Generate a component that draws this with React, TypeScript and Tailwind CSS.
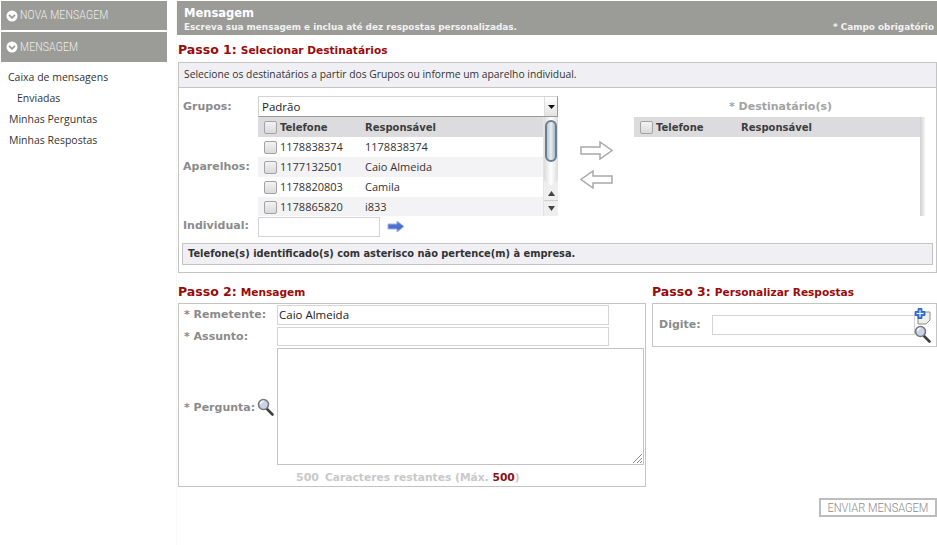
import React from 'react';

const verdana = 'font-["DejaVu_Sans",Verdana,sans-serif]';
const tahoma = 'font-["Open_Sans",sans-serif]';

function NavHeader({ label, className }: { label: string; className: string }) {
  return (
    <div className={`bg-[#9b9b98] flex items-center pl-[5px] gap-[2px] overflow-hidden ${className}`}>
      <svg width="12" height="12" viewBox="0 0 12 12" className="shrink-0">
        <circle cx="6" cy="6" r="5.5" fill="#ffffff" />
        <path d="M3 4.8 L6 7.8 L9 4.8" fill="none" stroke="#9b9b98" strokeWidth="1.8" />
      </svg>
      <span className='inline-block origin-left scale-x-[0.8] -translate-y-[1px] whitespace-nowrap font-["Roboto",sans-serif] font-light text-[13px] tracking-[0.2px] leading-none text-[#efefed]'>{label}</span>
    </div>
  );
}

function CheckBox() {
  return <span className="block w-[13px] h-[13px] shrink-0 rounded-[2px] border border-[#a3a3a3] bg-linear-to-b from-[#f2f2f2] to-[#dadada]" />;
}

function TableHeader() {
  return (
    <div className="h-[20px] bg-[#dcdcde] flex items-center pl-[6px] text-[10px] font-bold text-[#3d3d3d]">
      <CheckBox />
      <span className="ml-[3px] w-[85px]">Telefone</span>
      <span>Responsável</span>
    </div>
  );
}

function OutlineArrow({ left }: { left?: boolean }) {
  return (
    <svg width="33" height="19" viewBox="0 0 33 19" className={left ? '-scale-x-100' : ''}>
      <path d="M1 6 H20 V1 L32 9.5 L20 18 V13 H1 Z" fill="#ffffff" stroke="#a9a9a9" strokeWidth="1.5" />
    </svg>
  );
}

function Lens() {
  return (
    <svg width="17" height="18" viewBox="0 0 17 18">
      <path d="M10 11 L15.5 16.5" stroke="#3f3f3f" strokeWidth="2.6" strokeLinecap="round" />
      <circle cx="6.5" cy="6.5" r="5" fill="#c9d3ea" stroke="#77797d" strokeWidth="1.6" />
      <path d="M3.5 6 A3.2 3.2 0 0 1 6.5 3.2" fill="none" stroke="#ffffff" strokeWidth="1.2" />
    </svg>
  );
}

function Heading({ step, title }: { step: string; title: string }) {
  return (
    <div className="text-[#9a0b0b] font-bold leading-none flex items-baseline gap-[4px]">
      <span className="text-[12.5px]">{step}</span>
      <span className="text-[10.6px]">{title}</span>
    </div>
  );
}

const rows = [
  ['1178838374', '1178838374'],
  ['1177132501', 'Caio Almeida'],
  ['1178820803', 'Camila'],
  ['1178865820', 'i833'],
];

export default function App() {
  return (
    <div className={`${verdana} w-[937px] h-[545px] overflow-hidden bg-white flex text-[#333]`}>
      <aside className="w-[176px] shrink-0 pt-[1px] pl-[1px] pr-[9px]">
        <NavHeader label="NOVA MENSAGEM" className="h-[29px] mb-[2px]" />
        <NavHeader label="MENSAGEM" className="h-[30px]" />
        <nav className={`${tahoma} mt-[5px] text-[10.5px] text-[#333] leading-[21px] pl-[7px]`}>
          <div>Caixa de mensagens</div>
          <div className="pl-[9px]">Enviadas</div>
          <div className="pl-[1px]">Minhas Perguntas</div>
          <div className="pl-[1px]">Minhas Respostas</div>
        </nav>
      </aside>

      <main className="flex-1 pt-[1px] pl-[1px] border-l border-[#f8f8f4]">
        <header className="h-[34px] -ml-[1px] bg-[#9b9b98] text-white font-bold pl-[7px] pr-[3px] pt-[6px]">
          <div className="text-[11.5px] leading-[12px]">Mensagem</div>
          <div className="flex justify-between text-[8.9px] leading-[11px] mt-[3px] text-[#f2f2f2]">
            <span>Escreva sua mensagem e inclua até dez respostas personalizadas.</span>
            <span>* Campo obrigatório</span>
          </div>
        </header>

        <div className="mt-[9px] h-[18px]">
          <Heading step="Passo 1:" title="Selecionar Destinatários" />
        </div>

        <section className="h-[211px] border border-[#c4c4c4]">
          <div className={`${tahoma} h-[25px] bg-[#f0f0f4] border-b border-[#c4c4c4] flex items-center pl-[5px] text-[10.3px] text-[#333]`}>
            Selecione os destinatários a partir dos Grupos ou informe um aparelho individual.
          </div>

          <div className="flex pl-[4px] pt-[8px]">
            <div className="w-[375px] grid grid-cols-[75px_300px] grid-rows-[21px_99px_21px] items-center text-[11px] font-bold text-[#8b8b8b]">
              <span className="pt-[1px]">Grupos:</span>
              <div className={`${tahoma} h-[21px] flex items-center justify-between bg-white border border-[#d4d4d4] border-r-[#9a9a9a] border-b-[#9a9a9a] pl-[3px] text-[11.5px] font-normal text-[#222]`}>
                Padrão
                <span className="w-[13px] h-[19px] flex items-center justify-center border-l border-[#ddd] bg-linear-to-b from-white to-[#e2e2e2]">
                  <svg width="7" height="4" viewBox="0 0 7 4"><path d="M0 0 H7 L3.5 4 Z" fill="#111" /></svg>
                </span>
              </div>

              <span className="pt-[1px]">Aparelhos:</span>
              <div className="h-[99px] overflow-hidden flex">
                <div className="flex-1">
                  <TableHeader />
                  {rows.map((r, i) => (
                    <div key={r[0]} className={`${tahoma} h-[20px] flex items-center pl-[6px] text-[11px] font-normal text-[#333] ${i % 2 ? 'bg-[#f3f3f5]' : 'bg-white'}`}>
                      <CheckBox />
                      <span className="ml-[3px] w-[85px]">{r[0]}</span>
                      <span>{r[1]}</span>
                    </div>
                  ))}
                </div>
                <div className="w-[15px] bg-[#efefef] flex flex-col border-l border-[#e4e4e4]">
                  <div className="h-[68px] bg-linear-to-r from-[#dcdcdc] via-white to-[#dcdcdc] rounded-b-[7px] pt-[3px] px-[1px]">
                    <div className="h-[42px] rounded-[7px] border-2 border-[#6c7d90] bg-linear-to-r from-[#b9c6d4] via-[#e9eef3] to-[#a9b9c9]" />
                  </div>
                  <div className="h-[15px] mt-[1px] flex items-center justify-center border-b border-[#cfcfcf]">
                    <svg width="7" height="5" viewBox="0 0 7 5"><path d="M0 5 H7 L3.5 0 Z" fill="#444" /></svg>
                  </div>
                  <div className="h-[15px] flex items-center justify-center">
                    <svg width="7" height="5" viewBox="0 0 7 5"><path d="M0 0 H7 L3.5 5 Z" fill="#444" /></svg>
                  </div>
                </div>
              </div>

              <span className="pb-[1px]">Individual:</span>
              <div className="flex items-center gap-[7px]">
                <div className="w-[122px] h-[20px] border border-[#d4d4d4] bg-white" />
                <svg width="18" height="13" viewBox="0 0 18 13">
                  <path d="M1 4 H10 V1 L17 6.5 L10 12 V9 H1 Z" fill="#4a70d2" stroke="#9fb2df" strokeWidth="1" />
                </svg>
              </div>
            </div>

            <div className="w-[76px] pl-[22px] pt-[45px] flex flex-col gap-[10px]">
              <OutlineArrow />
              <OutlineArrow left />
            </div>

            <div className="w-[291px]">
              <div className="h-[21px] flex items-center justify-center text-[11px] font-bold text-[#a3a3a3] pl-[2px] pt-[1px]">* Destinatário(s)</div>
              <div className="h-[99px] flex">
                <div className="w-[287px]"><TableHeader /></div>
                <div className="w-[5px] bg-linear-to-r from-[#cfcfcf] to-[#f4f4f4]" />
              </div>
            </div>
          </div>

          <div className="mt-[6px] mx-[3px] h-[22px] bg-[#f0f0f4] border border-[#c4c4c4] flex items-center pl-[5px] text-[9.85px] font-bold text-[#333]">
            Telefone(s) identificado(s) com asterisco não pertence(m) à empresa.
          </div>
        </section>

        <div className="flex mt-[13px] gap-[6px]">
          <div className="w-[468px]">
            <div className="h-[17px]"><Heading step="Passo 2:" title="Mensagem" /></div>
            <div className="h-[184px] border border-[#c4c4c4] pt-[1px]">
              <div className="grid grid-cols-[93px_1fr] grid-rows-[22px_21px_117px] items-start text-[11px] font-bold text-[#8b8b8b] pl-[5px]">
                <span className="h-[20px] flex items-center pt-[1px]">* Remetente:</span>
                <div className={`${tahoma} w-[332px] h-[20px] border border-[#d4d4d4] flex items-center pl-[1px] text-[11.5px] font-normal text-[#222]`}>Caio Almeida</div>
                <span className="h-[20px] flex items-center">* Assunto:</span>
                <div className="w-[332px] h-[19px] border border-[#d4d4d4]" />
                <span className="h-[117px] flex items-center gap-[3px] pt-[4px]">
                  * Pergunta:
                  <span className="mb-[3px] -ml-[1px]"><Lens /></span>
                </span>
                <div className="w-[367px] h-[117px] border border-[#c4c4c4] flex items-end justify-end">
                  <svg width="11" height="11" viewBox="0 0 11 11">
                    <path d="M1 10 L10 1 M5 10 L10 5 M8 10 L10 8" stroke="#8b8b8b" strokeWidth="1" />
                  </svg>
                </div>
              </div>
              <div className="mt-[5px] pl-[117px] flex gap-[6px] text-[11px] font-bold text-[#c9c9c9] leading-[16px]">
                <span>500</span>
                <span className="text-[10.7px]">Caracteres restantes (Máx. <span className="text-[#8a1010]">500</span>)</span>
              </div>
            </div>
          </div>

          <div className="w-[285px]">
            <div className="h-[17px]"><Heading step="Passo 3:" title="Personalizar Respostas" /></div>
            <div className="h-[44px] border border-[#c4c4c4] flex items-center pl-[6px] text-[11px] font-bold text-[#8b8b8b]">
              <span className="w-[53px] pt-[1px]">Digite:</span>
              <div className="w-[203px] h-[20px] border border-[#d4d4d4] bg-white" />
              <div className="flex flex-col -ml-[1px]">
                <svg width="17" height="17" viewBox="0 0 17 17">
                  <path d="M4 4 H16 V12 L12 16 H4 Z" fill="#f0efe6" stroke="#8d8d85" strokeWidth="1" />
                  <path d="M4 0.5 H8 V3.5 H11 V7.5 H8 V10.5 H4 V7.5 H1 V3.5 H4 Z" fill="#3a78dc" stroke="#1f57b8" strokeWidth="0.8" />
                  <path d="M6 2 V9 M2.5 5.5 H9.5" stroke="#ffffff" strokeWidth="1" />
                </svg>
                <Lens />
              </div>
            </div>
          </div>
        </div>

        <div className="flex justify-end mt-[11px]">
          <div className="w-[118px] h-[19px] border-2 border-[#bdbdbd] flex items-center justify-center overflow-hidden">
            <span className='inline-block shrink-0 scale-x-[0.92] whitespace-nowrap font-["Roboto",sans-serif] font-light text-[12px] text-[#8a8a8a] leading-none'>
              ENVIAR MENSAGEM
            </span>
          </div>
        </div>
      </main>
    </div>
  );
}
